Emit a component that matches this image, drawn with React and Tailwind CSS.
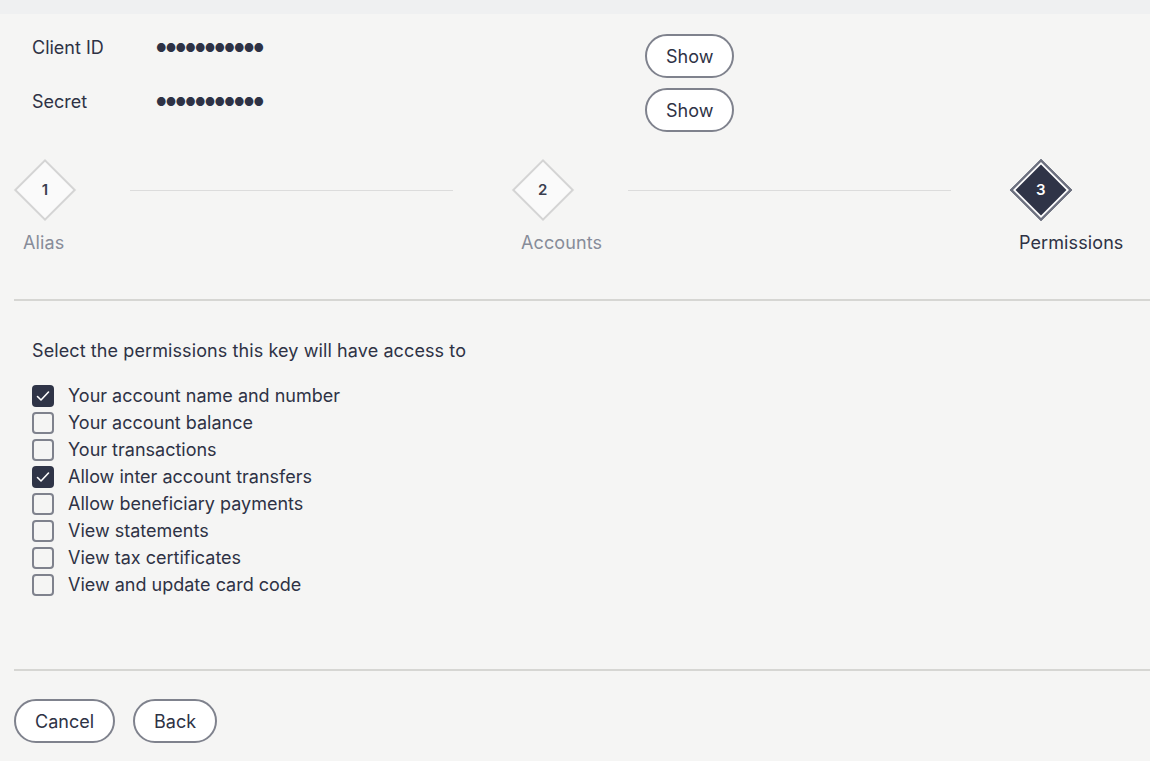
import React, { useState } from 'react';

const font = { fontFamily: 'Inter, "Noto Sans", sans-serif' };

const PillButton = ({ children, className = '' }) => (
    <button className={`h-[44px] px-[19px] rounded-full border-2 border-[#7f828d] bg-white text-[18px] text-[#2e3245] ${className}`}>
        {children}
    </button>
);

const Step = ({ n, label, state, line }) => {
    const active = state === 'active';
    return (
        <div className="flex flex-col items-start">
            <div className="flex items-center w-full">
                <div
                    className={`w-[44px] h-[44px] shrink-0 rotate-45 flex items-center justify-center border-2 ${active
                        ? 'bg-[#2f3447] border-[#6e7281] shadow-[inset_0_0_0_2px_#ffffff]'
                        : 'bg-[#fafafa] border-[#d4d4d4]'}`}
                >
                    <span className={`-rotate-45 text-[15px] font-semibold ${active ? 'text-white' : 'text-[#3a3e4f]'}`}>{n}</span>
                </div>
                {line && <div className="flex-1 h-px bg-[#dcdcdc] ml-[63px] mr-[68px]" />}
            </div>
            <span className={`mt-[19px] text-[18px] leading-6 tracking-[0.1px] ${active ? 'text-[#2e3245]' : 'text-[#878c99]'}`}>{label}</span>
        </div>
    );
};

const permissions = [
    { label: 'Your account name and number', checked: true },
    { label: 'Your account balance', checked: false },
    { label: 'Your transactions', checked: false },
    { label: 'Allow inter account transfers', checked: true },
    { label: 'Allow beneficiary payments', checked: false },
    { label: 'View statements', checked: false },
    { label: 'View tax certificates', checked: false },
    { label: 'View and update card code', checked: false },
];

const Checkbox = ({ checked, onClick }) => (
    <div
        onClick={onClick}
        className={`w-[22px] h-[22px] rounded-[4px] flex items-center justify-center cursor-pointer ${checked
            ? 'bg-[#2f3447]'
            : 'border-2 border-[#7f828d] bg-transparent'}`}
    >
        {checked && (
            <svg width="16" height="16" viewBox="0 0 16 16" fill="none">
                <polyline points="2.5,8.5 6,12 13.5,4" stroke="#ffffff" strokeWidth="1.6" strokeLinecap="round" strokeLinejoin="round" />
            </svg>
        )}
    </div>
);

export default function App() {
    const [perms, setPerms] = useState(permissions);

    const toggle = (i) => setPerms(prev => prev.map((p, j) => j === i ? { ...p, checked: !p.checked } : p));

    return (
        <div className="min-h-[761px] bg-[#f5f5f4] text-[#2e3245]" style={font}>
            <div className="h-[14px] bg-[#eff0f1]" />

            <div className="pl-[14px]">
                {/* Credentials */}
                <div className="pt-[20px] pl-[18px]">
                    {['Client ID', 'Secret'].map((label) => (
                        <div key={label} className="flex items-start h-[54px]">
                            <span className="w-[124px] mt-[2px] text-[18px] leading-6">{label}</span>
                            <span className="w-[489px] mt-[2px] text-[11.5px] leading-6 tracking-[-0.75px]">●●●●●●●●●●●</span>
                            <PillButton>Show</PillButton>
                        </div>
                    ))}
                </div>

                {/* Stepper */}
                <div className="mt-[26px] pl-[9px] grid grid-cols-[498px_498px_auto]">
                    <Step n="1" label="Alias" state="done" line />
                    <Step n="2" label="Accounts" state="done" line />
                    <Step n="3" label="Permissions" state="active" />
                </div>

                <div className="mt-[44px] h-[2px] bg-[#d6d6d3]" />

                {/* Permissions */}
                <div className="pt-[38px] pl-[18px] h-[368px]">
                    <p className="text-[18px] leading-6 tracking-[0.1px]">Select the permissions this key will have access to</p>
                    <div className="mt-[22px] flex flex-col gap-[5px]">
                        {perms.map((p, i) => (
                            <label key={p.label} className="flex items-center gap-[14px] h-[22px]">
                                <Checkbox checked={p.checked} onClick={() => toggle(i)} />
                                <span className="text-[18px] leading-6">{p.label}</span>
                            </label>
                        ))}
                    </div>
                </div>

                <div className="h-[2px] bg-[#d6d6d3]" />

                {/* Footer */}
                <div className="pt-[28px] flex gap-[18px]">
                    <PillButton>Cancel</PillButton>
                    <PillButton>Back</PillButton>
                </div>
            </div>
        </div>
    );
}
